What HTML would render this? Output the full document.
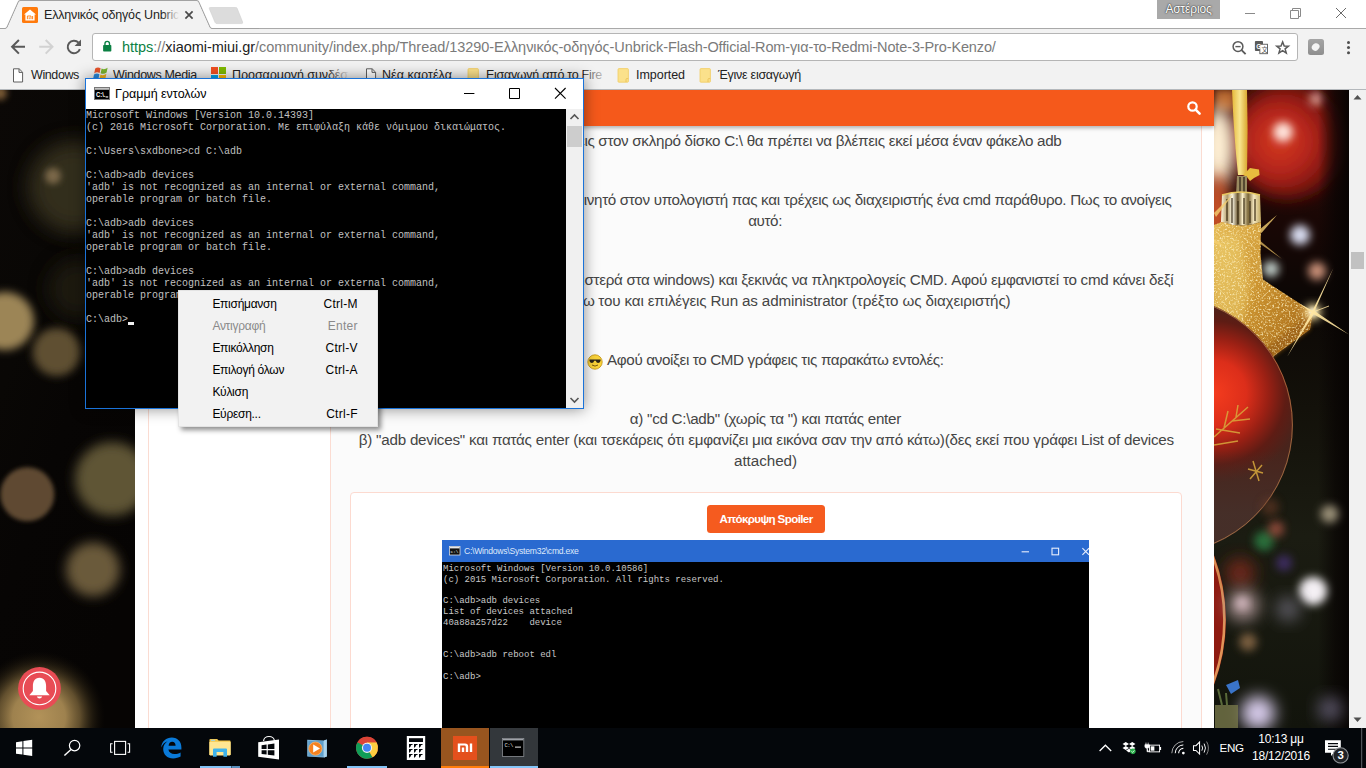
<!DOCTYPE html>
<html lang="el">
<head>
<meta charset="utf-8">
<title>Ελληνικός οδηγός Unbrick</title>
<style>
*{box-sizing:border-box}
html,body{margin:0;padding:0}
body{width:1366px;height:768px;overflow:hidden;position:relative;background:#fff;font-family:"Liberation Sans",sans-serif;}
.abs{position:absolute}
/* ---------- browser chrome ---------- */
#titlebar{position:absolute;left:0;top:0;width:1366px;height:29px;background:#fff}
#toolbar{position:absolute;left:0;top:29px;width:1366px;height:37px;background:#f2f2f2}
#bookbar{position:absolute;left:0;top:66px;width:1366px;height:24px;background:#f2f2f2;border-bottom:1px solid #b4b8bc}
#tabtitle{position:absolute;left:44px;top:6px;width:135px;height:18px;font-size:12.5px;line-height:18px;color:#222;white-space:nowrap;overflow:hidden}
#urlbox{position:absolute;left:92px;top:4px;width:1138px;height:28px;background:#fff;border:1px solid #b5b5b5;border-radius:3px}
#url{position:absolute;left:29px;top:1px;height:24px;line-height:24px;font-size:14.5px;white-space:nowrap;color:#7a7a7a}
.bm{position:absolute;top:0;height:18px;line-height:18px;font-size:12.5px;color:#222;white-space:nowrap}
#user{position:absolute;left:1157px;top:0;width:63px;height:19px;background:#a9a9a9;color:#fff;font-size:12px;letter-spacing:-.18px;line-height:18px;text-align:center;text-shadow:0 0 2px #333,0 0 1px #333}
/* ---------- page ---------- */
#page{position:absolute;left:0;top:89px;width:1349px;height:639px;background:#0b0805;overflow:hidden}
#content{position:absolute;left:135px;top:0;width:1079px;height:639px;background:#fff}
#rightcol{position:absolute;left:195px;top:0;width:872px;height:639px;background:#fbfbfb;border-left:1px solid #fbdcd2;border-right:1px solid #fbdcd2}
#orange{position:absolute;left:135px;top:1px;width:1079px;height:36px;background:#f5591b;box-shadow:0 2px 4px rgba(0,0,0,.3)}
.pl{position:absolute;font-size:15.2px;line-height:21px;color:#454545;height:21px;white-space:nowrap}
.pr{position:absolute;font-size:15.2px;letter-spacing:-.3px;line-height:21px;color:#454545;height:21px;text-align:right;white-space:nowrap}
#spoiler{position:absolute;left:350px;top:403px;width:832px;height:260px;background:#fff;border:1px solid #fcdad0;border-radius:4px}
#spbtn{position:absolute;left:707px;top:416px;width:118px;height:28px;background:#f55b1f;border-radius:3.5px;color:#fff;font-size:11.6px;font-weight:bold;letter-spacing:-.62px;line-height:27px;text-align:center;white-space:nowrap}
#img2{position:absolute;left:442px;top:451px;width:647px;height:200px;background:#000}
#img2 .tb{position:absolute;left:0;top:0;width:647px;height:22px;background:#2a6ad0}
#img2 pre{position:absolute;left:1px;top:23.8px;margin:0;font-family:"Liberation Mono",monospace;font-size:9px;line-height:10.83px;color:#c8c8c8}
#vscroll{position:absolute;left:1349px;top:89px;width:17px;height:639px;background:#f1f1f1}
/* ---------- cmd window ---------- */
#cmd{position:absolute;left:85px;top:78px;width:499px;height:331px;background:#000;border:1px solid #1a73d9;box-shadow:0 0 14px rgba(0,0,0,.45)}
#cmd .tb{position:absolute;left:0;top:0;width:497px;height:30px;background:#fff}
#cmd .tt{position:absolute;left:29px;top:6px;font-size:12.5px;line-height:18px;color:#000;white-space:nowrap}
#cmd pre{position:absolute;left:0;top:31.4px;margin:0;font-family:"Liberation Mono",monospace;font-size:10px;line-height:12px;color:#c0c0c0}
#cmd .sb{position:absolute;left:480px;top:30px;width:17px;height:299px;background:#f0f0f0}
/* ---------- context menu ---------- */
#ctx{position:absolute;left:178px;top:290px;width:200px;height:137px;background:#f2f2f2;border:1px solid #e3e3e3;box-shadow:3px 3px 5px rgba(0,0,0,.45)}
#ctx div{position:absolute;left:33.4px;width:145.4px;height:22px;line-height:22px;font-size:12px;letter-spacing:-.28px;color:#000;white-space:nowrap}
#ctx div span{position:absolute;right:0;top:0;letter-spacing:.27px}
#ctx div.dis{color:#8a8a8a}
/* ---------- taskbar ---------- */
#taskbar{position:absolute;left:0;top:728px;width:1366px;height:40px;background:#04070b}
.tbtn{position:absolute;top:0;width:48px;height:40px}
.ul{position:absolute;bottom:0;height:2px;background:#76b9ed}
.tray{position:absolute;color:#fff;font-size:12px;white-space:nowrap}
</style>
</head>
<body>

<!-- ================= PAGE ================= -->
<div id="page">
  <svg class="abs" style="left:0;top:0" width="135" height="639" viewBox="0 0 135 639">
    <defs>
      <filter id="b3" x="-50%" y="-50%" width="200%" height="200%"><feGaussianBlur stdDeviation="3"/></filter>
      <filter id="b2" x="-50%" y="-50%" width="200%" height="200%"><feGaussianBlur stdDeviation="2"/></filter>
      <filter id="b4" x="-50%" y="-50%" width="200%" height="200%"><feGaussianBlur stdDeviation="4"/></filter>
      <filter id="b6" x="-50%" y="-50%" width="200%" height="200%"><feGaussianBlur stdDeviation="6"/></filter>
      <filter id="b10" x="-50%" y="-50%" width="200%" height="200%"><feGaussianBlur stdDeviation="10"/></filter>
      <radialGradient id="glow1"><stop offset="0" stop-color="#b29259"/><stop offset=".4" stop-color="#a68852" stop-opacity=".95"/><stop offset=".62" stop-color="#80683c" stop-opacity=".75"/><stop offset=".82" stop-color="#40341c" stop-opacity=".4"/><stop offset="1" stop-color="#1a140a" stop-opacity="0"/></radialGradient>
      <linearGradient id="lg0" x1="0" y1="0" x2=".6" y2="1"><stop offset="0" stop-color="#0b0806"/><stop offset=".35" stop-color="#090705"/><stop offset=".6" stop-color="#070504"/><stop offset="1" stop-color="#060403"/></linearGradient>
    </defs>
    <rect width="135" height="639" fill="url(#lg0)"/>
    <circle cx="74" cy="98" r="46" fill="#3e3724" opacity=".8" filter="url(#b10)"/>
    <circle cx="0" cy="4" r="7" fill="#7a5a34" filter="url(#b3)"/>
    <circle cx="53" cy="87" r="8" fill="#7a6848" filter="url(#b3)"/>
    <circle cx="78" cy="200" r="30" fill="#2c2517" opacity=".6" filter="url(#b10)"/>
    <circle cx="5" cy="232" r="29" fill="#9c8556" filter="url(#b4)"/>
    <circle cx="56.6" cy="263" r="24" fill="#5e5032" filter="url(#b4)"/>
    <circle cx="112" cy="390" r="37" fill="#5e5436" filter="url(#b6)"/>
    <circle cx="27.3" cy="405.3" r="27" fill="#5e4a33" filter="url(#b2)"/>
    <circle cx="93" cy="480.5" r="27" fill="#6a5a3a" filter="url(#b6)"/>
    <circle cx="39" cy="628" r="66" fill="url(#glow1)"/>
    <circle cx="39.5" cy="599.4" r="21.4" fill="#e84c55"/>
    <circle cx="39.5" cy="599.4" r="16.3" fill="none" stroke="#fff" stroke-width="1.1"/>
    <g transform="translate(.5 .4)"><path d="M39 588.4 C34.2 588.4 32.4 592.4 32.4 596.6 V601.6 L28.8 605.8 H49.2 L45.6 601.6 V596.6 C45.6 592.4 43.8 588.4 39 588.4 Z" fill="#fff"/>
    <path d="M36.4 607.2 A2.7 2.7 0 0 0 41.6 607.2 Z" fill="#fff"/></g>
  </svg>
  <svg class="abs" style="left:1214px;top:0" width="135" height="639" viewBox="1214 0 135 639">
    <defs>
      <filter id="c2" x="-50%" y="-50%" width="200%" height="200%"><feGaussianBlur stdDeviation="2"/></filter>
      <filter id="c4" x="-50%" y="-50%" width="200%" height="200%"><feGaussianBlur stdDeviation="4"/></filter>
      <filter id="c8" x="-50%" y="-50%" width="200%" height="200%"><feGaussianBlur stdDeviation="8"/></filter>
      <linearGradient id="rg0" x1="0" y1="0" x2="0" y2="1"><stop offset="0" stop-color="#3a0d08"/><stop offset=".2" stop-color="#1a0705"/><stop offset=".32" stop-color="#0c0705"/><stop offset=".5" stop-color="#13110a"/><stop offset=".7" stop-color="#1b1c12"/><stop offset="1" stop-color="#12140c"/></linearGradient>
      <radialGradient id="rb1" cx=".42" cy=".5" r=".62"><stop offset="0" stop-color="#d63a22"/><stop offset=".45" stop-color="#b3241a"/><stop offset=".8" stop-color="#6e120c"/><stop offset="1" stop-color="#3a0a06"/></radialGradient>
      <radialGradient id="rb2" gradientUnits="userSpaceOnUse" cx="1214" cy="304" r="90"><stop offset="0" stop-color="#f43c1e"/><stop offset=".36" stop-color="#dc2e1a"/><stop offset=".6" stop-color="#9a2014"/><stop offset=".8" stop-color="#5e1c14"/><stop offset="1" stop-color="#48241c"/></radialGradient>
      <linearGradient id="rb2d" gradientUnits="userSpaceOnUse" x1="0" y1="362" x2="0" y2="425"><stop offset="0" stop-color="#45302a" stop-opacity="0"/><stop offset="1" stop-color="#45302a" stop-opacity=".88"/></linearGradient>
      <linearGradient id="gold" x1="0" y1="0" x2="1" y2="1"><stop offset="0" stop-color="#e6bc58"/><stop offset=".4" stop-color="#cc9430"/><stop offset=".75" stop-color="#b0741e"/><stop offset="1" stop-color="#865212"/></linearGradient>
      <linearGradient id="cap" x1="0" y1="0" x2="1" y2="0"><stop offset="0" stop-color="#fff6dc"/><stop offset=".16" stop-color="#b09a68"/><stop offset=".28" stop-color="#fffbea"/><stop offset=".42" stop-color="#6a5630"/><stop offset=".54" stop-color="#fdf2cc"/><stop offset=".68" stop-color="#7a6638"/><stop offset=".82" stop-color="#f6e8c0"/><stop offset="1" stop-color="#c0a860"/></linearGradient>
      <linearGradient id="edge" x1="0" y1="0" x2="1" y2="0"><stop offset="0" stop-color="#080403" stop-opacity="0"/><stop offset=".55" stop-color="#080403" stop-opacity=".7"/><stop offset="1" stop-color="#060302" stop-opacity=".95"/></linearGradient>
      <linearGradient id="rib" x1="0" y1="0" x2="1" y2="0"><stop offset="0" stop-color="#e6b93a"/><stop offset=".5" stop-color="#f8e58e"/><stop offset="1" stop-color="#d9a52c"/></linearGradient>
    </defs>
    <rect x="1214" width="135" height="639" fill="url(#rg0)"/>
    <!-- top red ornament -->
    <circle cx="1289" cy="52" r="58" fill="url(#rb1)" filter="url(#c8)"/>
    <circle cx="1283" cy="43" r="10" fill="#ffe4dc" filter="url(#c4)"/>
    <circle cx="1316" cy="10" r="7" fill="#e8b0a8" opacity=".8" filter="url(#c4)"/>
    <rect x="1318" y="0" width="31" height="639" fill="url(#edge)"/>
    <!-- top-left glow -->
    <rect x="1214" y="0" width="22" height="22" fill="#b8682e" filter="url(#c4)"/>
    <ellipse cx="1218" cy="58" rx="17" ry="40" fill="#fff0d4" filter="url(#c8)"/>
    <ellipse cx="1217" cy="125" rx="12" ry="40" fill="#d9582a" filter="url(#c8)"/>
    <!-- ribbon -->
    <path d="M1232 0 H1247 L1247.6 40 L1247 86 H1238 L1235.6 60 L1233.4 30 Z" fill="url(#rib)"/>
    <path d="M1243 86 L1250 79 L1259 80.6 L1259.6 86 L1254 89 L1250 92 L1247 88 Z" fill="#e8bd3e"/>
    <!-- cap -->
    <path d="M1237 87 H1247 V106 H1236 Z" fill="#9a8a60"/><path d="M1240 88 V105 M1244 88 V105" stroke="#3a3020" stroke-width="1.4"/>
    <path d="M1222 106 Q1241 100 1260 106 L1261 133 Q1241 140 1221 133 Z" fill="url(#cap)"/>
    <path d="M1227 110 V132 M1232 109 V134 M1238 112 V135 M1244 109 V135 M1250 112 V134 M1255 110 V132" stroke="#3a2c14" stroke-width="1.6" opacity=".75"/>
    <path d="M1222 106 Q1241 100 1260 106" fill="none" stroke="#e8c860" stroke-width="1.6"/>
    <!-- gold star body -->
    <path d="M1214 136 L1222 133 Q1241 140 1261 133 L1260.5 165 L1263 190.6 L1313 223 L1310 240.6 L1274.6 266.6 L1240 300 L1214 300 Z" fill="url(#gold)"/>
    <path d="M1214 150 L1240 146 L1250 200 L1240 250 L1214 262 Z" fill="#f2d878" opacity=".45" filter="url(#c4)"/>
    <path d="M1313 223 L1310 240.6 L1274.6 266.6 L1250 290 L1262 262 L1296 236 Z" fill="#9a5e18" opacity=".75" filter="url(#c2)"/>
    <filter id="glit" x="0" y="0" width="100%" height="100%"><feTurbulence type="fractalNoise" baseFrequency=".55" numOctaves="2" seed="3"/><feColorMatrix values="0 0 0 0 1  0 0 0 0 .9  0 0 0 0 .55  0 0 0 3.4 -1.7"/></filter>
    <clipPath id="gcp"><path d="M1214 136 L1222 133 Q1241 140 1261 133 L1260.5 165 L1263 190.6 L1313 223 L1310 240.6 L1274.6 266.6 L1240 300 L1214 300 Z"/></clipPath>
    <g clip-path="url(#gcp)"><rect x="1214" y="130" width="110" height="180" filter="url(#glit)" opacity=".8"/></g>
    <!-- bokeh -->
    <circle cx="1300" cy="146" r="10" fill="#d8dcf0" filter="url(#c4)"/>
    <circle cx="1317" cy="182" r="9" fill="#c99078" filter="url(#c4)"/>
    <circle cx="1271" cy="180" r="8" fill="#dff0ea" opacity=".85" filter="url(#c4)"/>
    
    <!-- big red ball -->
    <circle cx="1164" cy="336" r="129" fill="url(#rb2)"/>
    <circle cx="1164" cy="336" r="129" fill="url(#rb2d)"/>
    <circle cx="1164" cy="336" r="128.4" fill="none" stroke="#c98a50" stroke-width=".8" opacity=".8"/>
    <path d="M1214 348 L1248 318 M1224 339 L1228 322 M1232 332 L1250 330 M1216 340 L1240 344 M1214 356 L1238 352 M1236 328 L1238 316 M1253 372 L1259 392 M1248 380 L1263 384 M1250 390 L1262 376" stroke="#d8a83c" stroke-width="1.5" fill="none" opacity=".85"/>
    <!-- sparkle -->
    <circle cx="1313" cy="223" r="8" fill="#ffe9a8" filter="url(#c4)"/>
    <circle cx="1313" cy="223" r="3.4" fill="#fffbe8" filter="url(#c2)"/>
    <path d="M1333.4 179 L1314.6 222 L1349 245.6 L1313.6 225.2 L1287 268 L1311.4 223.6 L1298 214 L1312.6 221.4 Z" fill="#ffe6a0" opacity=".9"/>
    <path d="M1313 223 L1329 217" stroke="#ffe6a0" stroke-width="1" opacity=".8"/>
    <path d="M1259 141 L1277 126 L1261.5 144 Z M1214 124 L1234 104 L1216 128 Z M1214 150 L1226 158 L1214 154 Z" fill="#f5d070" opacity=".8"/>
    <path d="M1258 150 L1282 170 L1259 154 Z" fill="#f1c868" opacity=".7"/>
    <!-- second ball -->
    <circle cx="1044" cy="531" r="182" fill="#8e1a10"/>
    <circle cx="1044" cy="531" r="180.4" fill="none" stroke="#e09458" stroke-width="2.6"/>
    <!-- lower bokeh -->
    <circle cx="1264" cy="452" r="10" fill="#2f8a4a" opacity=".75" filter="url(#c4)"/>
    <circle cx="1276" cy="440" r="8" fill="#b85a48" opacity=".7" filter="url(#c4)"/><circle cx="1270" cy="418" r="9" fill="#6a3a28" opacity=".6" filter="url(#c4)"/>
    <circle cx="1240" cy="484" r="15" fill="#7a2a1c" opacity=".85" filter="url(#c8)"/>
    <circle cx="1329.5" cy="425" r="9" fill="#9a9078" filter="url(#c4)"/>
    <circle cx="1313" cy="502" r="14" fill="#f4f0f4" filter="url(#c4)"/>
    <circle cx="1243" cy="516" r="16" fill="#a08a8a" filter="url(#c8)"/><circle cx="1242" cy="514" r="6" fill="#d8bcc4" filter="url(#c4)"/>
    <circle cx="1288" cy="520" r="12" fill="#5a5860" filter="url(#c8)"/>
    <circle cx="1284" cy="474" r="8" fill="#5a3aa0" opacity=".55" filter="url(#c4)"/>
    <circle cx="1248" cy="553" r="9" fill="#7a5e40" filter="url(#c4)"/>
    <circle cx="1258" cy="624" r="17" fill="#d8ccec" filter="url(#c8)"/>
    <circle cx="1330" cy="620" r="12" fill="#5a5468" filter="url(#c8)"/>
    <path d="M1226 596 L1238 591 L1240 599 L1231 605 Z" fill="#3a74c8"/>
    <rect x="1215" y="616" width="23" height="23" fill="#77774a" opacity=".8"/><path d="M1218 600 L1222 616 M1226 604 L1227 616" stroke="#5a6a3a" stroke-width="2"/>
  </svg>
  <div id="content">
    <div id="rightcol"></div>
    <div style="position:absolute;left:13px;top:0;width:1px;height:639px;background:#fbdcd2"></div>
  </div>
  <div id="orange">
    <svg class="abs" style="left:1051px;top:10px" width="16" height="16" viewBox="0 0 16 16"><circle cx="6.5" cy="6.5" r="4.2" fill="none" stroke="#fff" stroke-width="2.2"/><path d="M9.6 9.6 L13.6 13.6" stroke="#fff" stroke-width="2.6" stroke-linecap="round"/></svg>
  </div>
  <div class="pr" style="right:754.5px;top:41px">Αν τώρα μπεις</div>
  <div class="pr" style="right:733.0px;top:100px">Στη συνέχεια συνδέεις το κινητό</div>
  <div class="pr" style="right:726.5px;top:180px">Πατάς το κουμπί έναρξη (κάτω αριστερά</div>
  <div class="pr" style="right:754.5px;top:201px">κλικ πάνω</div>
  <div class="pl" style="left:598.3px;top:41px;letter-spacing:-0.286px">στον σκληρό δίσκο C:\ θα πρέπει να βλέπεις εκεί μέσα έναν φάκελο adb</div>
  <div class="pl" style="left:619.8px;top:100px;letter-spacing:-0.311px">στον υπολογιστή πας και τρέχεις ως διαχειριστής ένα cmd παράθυρο. Πως το ανοίγεις</div>
  <div class="pl" style="left:748.2px;top:121px;letter-spacing:-0.393px">αυτό:</div>
  <div class="pl" style="left:626.4px;top:180px;letter-spacing:-0.267px">στα windows) και ξεκινάς να πληκτρολογείς CMD. Αφού εμφανιστεί το cmd κάνει δεξί</div>
  <div class="pl" style="left:598.3px;top:201px;letter-spacing:-0.143px">του και επιλέγεις Run as administrator (τρέξτο ως διαχειριστής)</div>
  <div class="pl" style="left:607.0px;top:260px;letter-spacing:-0.348px">Αφού ανοίξει το CMD γράφεις τις παρακάτω εντολές:</div>
  <div class="pl" style="left:629.8px;top:319px;letter-spacing:-0.277px">α) "cd C:\adb" (χωρίς τα ") και πατάς enter</div>
  <div class="pl" style="left:358.7px;top:340px;letter-spacing:-0.221px">β) "adb devices" και πατάς enter (και τσεκάρεις ότι εμφανίζει μια εικόνα σαν την από κάτω)(δες εκεί που γράφει List of devices</div>
  <div class="pl" style="left:734.0px;top:361px;letter-spacing:-0.036px">attached)</div>
  <svg class="abs" style="left:586.6px;top:264.6px" width="16" height="16" viewBox="0 0 16 16"><circle cx="8" cy="8" r="7.2" fill="#fbd43a" stroke="#c79a1c" stroke-width=".9"/><path d="M2.4 5.6 H13.6 V6.6 Q13.4 9 11.2 9 Q9.4 9 8.8 6.8 H7.2 Q6.6 9 4.8 9 Q2.6 9 2.4 6.6 Z" fill="#2a2418"/><path d="M5 11 Q8 13.2 11 11" fill="none" stroke="#7a5a10" stroke-width="1"/></svg>
  <div id="spoiler"></div>
  <div id="spbtn">Απόκρυψη Spoiler</div>
  <div id="img2">
    <div class="tb">
      <svg class="abs" style="left:7px;top:6px" width="12" height="10" viewBox="0 0 12 10"><rect x=".4" y=".4" width="10.6" height="8.6" fill="#111" stroke="#d8dce4" stroke-width=".8"/><rect x=".8" y=".8" width="9.8" height="1.6" fill="#e8e8e8"/><text x="1.6" y="7.4" font-size="4.4" fill="#fff" font-family="Liberation Mono,monospace">c:\</text></svg>
      <div class="abs" style="left:22px;top:4px;font-size:8.6px;line-height:14px;color:#dfe9fb;letter-spacing:-.25px;white-space:nowrap">C:\Windows\System32\cmd.exe</div>
      <svg class="abs" style="left:575px;top:0" width="72" height="22" viewBox="0 0 72 22"><path d="M4.6 11.8 H12" stroke="#e8eefc" stroke-width="1.1"/><rect x="35" y="8.2" width="6.6" height="6.6" fill="none" stroke="#e8eefc" stroke-width="1.1"/><path d="M65.4 8.2 L72 14.8 M65.4 14.8 L72 8.2" stroke="#e8eefc" stroke-width="1.1"/></svg>
    </div>
<pre>Microsoft Windows [Version 10.0.10586]
(c) 2015 Microsoft Corporation. All rights reserved.

C:\adb&gt;adb devices
List of devices attached
40a88a257d22    device


C:\adb&gt;adb reboot edl

C:\adb&gt;</pre>
  </div>
</div>
<div id="vscroll">
  <div class="abs" style="left:2px;top:163px;width:13px;height:17px;background:#c1c1c1"></div>
  <svg class="abs" style="left:0;top:0" width="17" height="17"><path d="M4.5 10.5 L8.5 6 L12.5 10.5Z" fill="#505050"/></svg>
  <svg class="abs" style="left:0;top:622px" width="17" height="17"><path d="M4.5 6.5 L8.5 11 L12.5 6.5Z" fill="#505050"/></svg>
</div>

<!-- ================= CHROME TOP ================= -->
<div id="titlebar">

  <svg class="abs" style="left:0;top:0" width="260" height="29" viewBox="0 0 260 29">
    <path d="M235.6 7.5 Q236.6 7.2 237.1 8.3 L242.6 22 Q243 23.6 241.6 23.6 L217 23.6 Q215.6 23.6 215 22.3 L209.3 8.6 Q209 7.5 210.2 7.5 Z" fill="#dcdcdc" stroke="#cfcfcf" stroke-width=".6"/>
    <path d="M0 28.5 L5.2 28.5 Q6.6 28.3 7.2 27 L18.2 2.3 Q19 .6 20.6 .6 L196.4 .6 Q198 .6 198.8 2.3 L209.8 27 Q210.4 28.3 211.8 28.5 L260 28.5" fill="none" stroke="#a2a2a2" stroke-width="1.25"/>
    <path d="M5.2 29 Q6.9 28.8 7.6 27.3 L18.6 2.6 Q19.2 1.1 20.6 1.1 L196.4 1.1 Q197.8 1.1 198.4 2.6 L209.4 27.3 Q210.1 28.8 211.8 29 Z" fill="#f2f2f2"/>
    <rect x="22" y="7" width="16" height="16" rx="1.5" fill="#ff7a0c"/>
    <path d="M30 9.4 L36 14.4 L34.6 14.4 L34.6 20.4 L25.4 20.4 L25.4 14.4 L24 14.4 Z" fill="#fff"/>
    <path d="M27.4 19.2 V16 H31 V19.2 M29.2 17.3 V19.2 M32.6 16 V19.2" fill="none" stroke="#ff7a0c" stroke-width=".9"/>
    <path d="M185.4 11.4 L192.6 18.6 M192.6 11.4 L185.4 18.6" stroke="#4a4a4a" stroke-width="1.7" fill="none"/>
  </svg>
  <div class="abs" style="left:259px;top:28px;width:1107px;height:1px;background:#a9a9a9"></div>
  <div id="tabtitle" style="letter-spacing:-.17px">Ελληνικός οδηγός Unbrick Flash</div>
  <div class="abs" style="left:162px;top:4px;width:18px;height:22px;background:linear-gradient(90deg,rgba(242,242,242,0),#f2f2f2 95%)"></div>
  <div id="user">Αστέριος</div>
  <svg class="abs" style="left:1240px;top:0" width="120" height="28" viewBox="0 0 120 28">
    <path d="M5 13.5 H15" stroke="#8a8a8a" stroke-width="1"/>
    <path d="M50.5 10.5 H58.5 V18.5 H50.5 Z M52.5 10.5 V8.5 H60.5 V16.5 H58.5" fill="none" stroke="#8a8a8a" stroke-width="1"/>
    <path d="M96 8 L106 18 M106 8 L96 18" stroke="#6a6a6a" stroke-width="1"/>
  </svg>
</div>
<div id="toolbar">

  <svg class="abs" style="left:0;top:0" width="92" height="38" viewBox="0 0 92 38">
    <path d="M25 17.8 H13 M18.9 11 L12.1 17.8 L18.9 24.6" fill="none" stroke="#595959" stroke-width="2"/>
    <path d="M39.2 17.8 H51.4 M45.7 11 L52.5 17.8 L45.7 24.6" fill="none" stroke="#d2d2d2" stroke-width="2"/>
    <path d="M78.6 13.6 A6.3 6.3 0 1 0 79.9 20.2" fill="none" stroke="#595959" stroke-width="2"/>
    <path d="M81 10.6 V17 H74.6 Z" fill="#595959"/>
  </svg>
  <div id="urlbox" style="width:1206px">
    <svg class="abs" style="left:9.4px;top:5.6px" width="11" height="12.8" viewBox="0 0 12 14"><rect x="1.2" y="5.4" width="9" height="7.2" rx=".8" fill="#0b8043"/><path d="M3.2 6 V4 A2.5 2.5 0 0 1 8.2 4 V6" fill="none" stroke="#0b8043" stroke-width="1.5"/></svg>
    <div id="url"><span style="letter-spacing:-0.032px"><span style="color:#0b8043">https</span>://<span style="color:#222">xiaomi-miui.gr</span>/community/index.php/Thread</span><span style="letter-spacing:-0.046px">/13290-Ελληνικός-οδηγός-Unbrick-</span><span style="letter-spacing:-0.133px">Flash-Official-Rom-για-το-Redmi-Note-3-Pro-Kenzo/</span></div>
    <svg class="abs" style="left:1136px;top:4px" width="66" height="20" viewBox="0 0 66 20">
      <circle cx="9" cy="8.6" r="4.9" fill="none" stroke="#5a5a5a" stroke-width="1.5"/><path d="M12.6 12.2 L16.6 16.2" stroke="#5a5a5a" stroke-width="1.8"/><path d="M6.4 8.6 H11.6" stroke="#5a5a5a" stroke-width="1.4"/>
      <g transform="translate(32.2 9.4) scale(.9) translate(-33 -10)"><rect x="26" y="3" width="9" height="11" rx="1" fill="#5a5a5a"/><rect x="31.5" y="6.5" width="8.5" height="10.5" fill="#fff" stroke="#5a5a5a" stroke-width="1"/><text x="27.6" y="11.6" font-size="7" fill="#fff" font-family="Liberation Sans,sans-serif" font-weight="bold">G</text><text x="33.2" y="15.2" font-size="7" fill="#5a5a5a" font-family="Liberation Sans,Noto Sans CJK SC,sans-serif">文</text></g>
      <g transform="translate(53.6 9.6) scale(.84) translate(-54 -10)"><path d="M54 3.2 L55.9 8 L61 8.3 L57 11.5 L58.4 16.5 L54 13.7 L49.6 16.5 L51 11.5 L47 8.3 L52.1 8 Z" fill="none" stroke="#5a5a5a" stroke-width="1.75" stroke-linejoin="miter"/></g>
    </svg>
  </div>
  <div class="abs" style="left:1308px;top:10px;width:16px;height:16px;border-radius:2.5px;background:linear-gradient(#a5a5a5,#8e8e8e)"></div>
  <div class="abs" style="left:1312.4px;top:13.8px;width:7.4px;height:8.4px;border-radius:70% 55% 60% 55%;background:#f4f4f4;transform:rotate(35deg)"></div>
  <div class="abs" style="left:1347px;top:12.2px;width:3px;height:3px;border-radius:50%;background:#4f4f4f;box-shadow:0 5.1px 0 #4f4f4f,0 10.2px 0 #4f4f4f"></div>
</div>
<div id="bookbar">

  <svg class="abs" style="left:12px;top:2px" width="12" height="15" viewBox="0 0 12 15"><path d="M1.5 .8 H7.2 L10.6 4.2 V14 H1.5 Z M7 1 V4.4 H10.4" fill="#fff" stroke="#5f5f5f" stroke-width="1"/></svg><div class="bm" style="left:31px;letter-spacing:-0.39px">Windows</div>
  <svg class="abs" style="left:92.5px;top:-1px" width="17" height="17" viewBox="0 0 17 17"><path d="M2.2 3.6 Q4.6 1.4 7.6 3.2 L6.6 8 Q3.8 6.4 1.2 8.4 Z" fill="#e8532a"/><path d="M8.6 3.6 Q11.6 5 14.6 2.8 L13.6 7.6 Q10.8 9.6 7.6 8.2 Z" fill="#7ab52e"/><path d="M1 9.6 Q3.6 7.6 6.4 9.2 L5.4 14 Q2.6 12.4 0 14.4 Z" fill="#2a8be0"/><path d="M7.4 9.6 Q10.4 11 13.4 8.8 L12.4 13.6 Q9.6 15.6 6.4 14.2 Z" fill="#f6b71d"/></svg><div class="bm" style="left:113px;letter-spacing:-0.33px">Windows Media</div>
  <svg class="abs" style="left:211px;top:1px" width="15" height="15"><rect x="0" y="0" width="7" height="7" fill="#f25022"/><rect x="8" y="0" width="7" height="7" fill="#7fba00"/><rect x="0" y="8" width="7" height="7" fill="#00a4ef"/><rect x="8" y="8" width="7" height="7" fill="#ffb900"/></svg><div class="bm" style="left:232px;letter-spacing:-0.06px;width:118px;overflow:hidden">Προσαρμογή συνδέσ</div>
  <div class="abs" style="left:326px;top:0;width:24px;height:20px;background:linear-gradient(90deg,rgba(242,242,242,0),#f2f2f2)"></div>
  <svg class="abs" style="left:364.5px;top:2px" width="12" height="15" viewBox="0 0 12 15"><path d="M1.5 .8 H7.2 L10.6 4.2 V14 H1.5 Z M7 1 V4.4 H10.4" fill="#fff" stroke="#5f5f5f" stroke-width="1"/></svg><div class="bm" style="left:382px;letter-spacing:0.06px">Νέα καρτέλα</div>
  <svg class="abs" style="left:467px;top:2px" width="13" height="15" viewBox="0 0 13 15"><path d="M1 1.6 Q1 .6 2 .6 H10.4 Q11.4 .6 11.4 1.6 V13.4 Q11.4 14.2 10.6 14.2 H1.8 Q1 14.2 1 13.4 Z" fill="#fbe18b" stroke="#f1cd62" stroke-width=".8"/><path d="M9 14 V11.4 Q9 10.6 9.8 10.6 H11.2" fill="none" stroke="#e8bf50" stroke-width=".8"/></svg><div class="bm" style="left:486px;letter-spacing:-0.29px">Εισαγωγή από το Fire</div>
  <div class="abs" style="left:584px;top:0;width:22px;height:20px;background:linear-gradient(90deg,rgba(242,242,242,.2),rgba(242,242,242,.85))"></div>
  <svg class="abs" style="left:617px;top:2px" width="13" height="15" viewBox="0 0 13 15"><path d="M1 1.6 Q1 .6 2 .6 H10.4 Q11.4 .6 11.4 1.6 V13.4 Q11.4 14.2 10.6 14.2 H1.8 Q1 14.2 1 13.4 Z" fill="#fbe18b" stroke="#f1cd62" stroke-width=".8"/><path d="M9 14 V11.4 Q9 10.6 9.8 10.6 H11.2" fill="none" stroke="#e8bf50" stroke-width=".8"/></svg><div class="bm" style="left:636px;letter-spacing:-0.04px">Imported</div>
  <svg class="abs" style="left:699px;top:2px" width="13" height="15" viewBox="0 0 13 15"><path d="M1 1.6 Q1 .6 2 .6 H10.4 Q11.4 .6 11.4 1.6 V13.4 Q11.4 14.2 10.6 14.2 H1.8 Q1 14.2 1 13.4 Z" fill="#fbe18b" stroke="#f1cd62" stroke-width=".8"/><path d="M9 14 V11.4 Q9 10.6 9.8 10.6 H11.2" fill="none" stroke="#e8bf50" stroke-width=".8"/></svg><div class="bm" style="left:718px;letter-spacing:-0.26px">Έγινε εισαγωγή</div>
</div>

<!-- ================= CMD WINDOW ================= -->
<div id="cmd">
  <div class="tb">
    <svg class="abs" style="left:8px;top:8px" width="17" height="14" viewBox="0 0 17 14"><rect x=".5" y=".5" width="15" height="12" fill="#000" stroke="#777" stroke-width="1"/><rect x="1" y="1" width="14" height="1.8" fill="#c4c4c4"/><text x="2" y="10" font-size="6.4" font-weight="bold" fill="#fff" font-family="Liberation Sans,sans-serif" textLength="9.4" lengthAdjust="spacingAndGlyphs">C:\.</text><rect x="11.6" y="9.4" width="2.6" height="1.1" fill="#fff"/></svg>
    <svg class="abs" style="left:370px;top:0" width="127" height="30" viewBox="0 0 127 30"><path d="M8 14.5 H18.4" stroke="#000" stroke-width="1"/><path d="M53.5 9.5 H63.5 V19.5 H53.5 Z" fill="none" stroke="#000" stroke-width="1"/><path d="M99 9 L109.6 19.6 M109.6 9 L99 19.6" stroke="#000" stroke-width="1.1"/></svg>
    <div class="tt">Γραμμή εντολών</div>
  </div>
<pre>Microsoft Windows [Version 10.0.14393]
(c) 2016 Microsoft Corporation. Με επιφύλαξη κάθε νόμιμου δικαιώματος.

C:\Users\sxdbone&gt;cd C:\adb

C:\adb&gt;adb devices
'adb' is not recognized as an internal or external command,
operable program or batch file.

C:\adb&gt;adb devices
'adb' is not recognized as an internal or external command,
operable program or batch file.

C:\adb&gt;adb devices
'adb' is not recognized as an internal or external command,
operable program or batch file.

C:\adb&gt;</pre>
  <div class="abs" style="left:42.4px;top:242.6px;width:5.8px;height:3.2px;background:#f0f0f0"></div>
  <div class="sb">
    <div class="abs" style="left:1px;top:17px;width:15px;height:21px;background:#cdcdcd"></div>
    <svg class="abs" style="left:0;top:0" width="17" height="17"><path d="M4.5 10 L8.5 6 L12.5 10" fill="none" stroke="#555" stroke-width="1.6"/></svg>
    <svg class="abs" style="left:0;top:282px" width="17" height="17"><path d="M4.5 7 L8.5 11 L12.5 7" fill="none" stroke="#555" stroke-width="1.6"/></svg>
  </div>
</div>

<!-- ================= CONTEXT MENU ================= -->
<div id="ctx">
  <div style="top:2px">Επισήμανση<span>Ctrl-M</span></div>
  <div class="dis" style="top:24px">Αντιγραφή<span>Enter</span></div>
  <div style="top:46px">Επικόλληση<span>Ctrl-V</span></div>
  <div style="top:68px">Επιλογή όλων<span>Ctrl-A</span></div>
  <div style="top:90px">Κύλιση</div>
  <div style="top:112px">Εύρεση...<span>Ctrl-F</span></div>
</div>

<!-- ================= TASKBAR ================= -->
<div id="taskbar">

  <svg class="abs" style="left:0;top:0" width="600" height="40" viewBox="0 0 600 40">
    <!-- start -->
    <path d="M16 14.2 L22.4 13.3 V19.4 H16 Z M23.4 13.1 L32.2 11.8 V19.4 H23.4 Z M16 20.4 H22.4 V26.6 L16 25.7 Z M23.4 20.4 H32.2 V28 L23.4 26.8 Z" fill="#fff"/>
    <!-- search -->
    <circle cx="74.6" cy="17.6" r="5.2" fill="none" stroke="#fff" stroke-width="1.2"/><path d="M71 21.4 L64.4 27.6" stroke="#fff" stroke-width="1.4"/>
    <!-- task view -->
    <rect x="114.6" y="13.4" width="11" height="13" fill="none" stroke="#fff" stroke-width="1.1"/>
    <path d="M112.6 15.7 H110.6 V24.2 H112.6 M127.6 15.7 H129.6 V24.2 H127.6" fill="none" stroke="#fff" stroke-width="1.1"/>
    <!-- edge -->
    <path d="M161.2 19.6 C161.6 13 166.4 9.4 171.8 9.4 C177.8 9.4 181.4 13.8 181.4 19.4 V21.6 H168.4 C168.8 24.6 171.4 26 174.4 26 C176.8 26 178.8 25.4 180.6 24.4 V28.6 C178.6 29.8 176 30.4 173.2 30.4 C167.2 30.4 163.2 26.6 163.2 21 C163.2 17.4 165 14.8 167.6 13.2 C164.6 14 162.4 16.4 161.2 19.6 Z M168.6 17.8 H175.6 C175.6 15.4 174.2 13.8 172.2 13.8 C170.2 13.8 168.8 15.4 168.6 17.8 Z" fill="#0a7ad9" fill-rule="evenodd"/>
    <!-- explorer -->
    <path d="M209.4 12 Q209.4 11 210.4 11 H217.2 L218.6 12.6 H229.6 Q230.6 12.6 230.6 13.6 V27 H209.4 Z" fill="#f3c64a"/>
    <rect x="209.4" y="13.8" width="21.2" height="13.6" rx=".8" fill="#ffe692"/>
    <path d="M213 28.8 V21.4 Q213 20.4 214 20.4 H226 Q227 20.4 227 21.4 V28.8 H223.4 V24 H216.6 V28.8 Z" fill="#3fb3ec"/>
    <rect x="211" y="11.8" width="4" height="1" fill="#9ad8f0"/>
    <!-- store -->
    <path d="M263.6 13 C263.6 7 274.4 7 274.4 13" fill="none" stroke="#fff" stroke-width="1.2"/>
    <path d="M258.2 14.2 L279 11.4 V31.6 L258.2 28.8 Z" fill="#fff"/>
    <path d="M261.6 17.2 L266.6 16.6 V21 H261.6 Z M267.8 16.4 L274.4 15.6 V21 H267.8 Z M261.6 22.2 H266.6 V26.6 L261.6 26 Z M267.8 22.2 H274.4 V27.6 L267.8 26.8 Z" fill="#04070b"/>
    <!-- media player -->
    <path d="M307.2 11.8 L324 12.6 L326.8 11.6 V28.4 L324 29.6 L307.2 28.6 Z" fill="#7db6dc"/>
    <path d="M324 12.6 L326.8 11.6 V28.4 L324 29.6 Z" fill="#a9d2ec"/>
    <rect x="308.4" y="13" width="14.6" height="15.4" fill="#5f9fcc"/>
    <circle cx="315.4" cy="20.6" r="6.6" fill="#f58220"/><circle cx="315.4" cy="20.6" r="6.6" fill="none" stroke="#fbb26a" stroke-width=".8"/>
    <path d="M313.2 16.6 L320 20.6 L313.2 24.6 Z" fill="#fff"/>
    <!-- chrome -->
    <circle cx="367" cy="19.8" r="11" fill="#db4437"/>
    <path d="M367 19.8 L357.47 14.3 A11 11 0 0 0 372.5 29.33 Z" fill="#0f9d58"/>
    <path d="M367 19.8 L372.5 29.33 A11 11 0 0 0 376.53 14.3 L367 14.3 Z" fill="#ffcd40"/>
    <path d="M357.47 14.3 A11 11 0 0 1 376.53 14.3 L367 14.3 Z" fill="#db4437"/>
    <circle cx="367" cy="19.8" r="5.1" fill="#f1f1f1"/><circle cx="367" cy="19.8" r="4" fill="#4285f4"/>
    <!-- calculator -->
    <rect x="406.8" y="8" width="18.4" height="24" fill="#fff"/>
    <rect x="409" y="10.2" width="14" height="3.8" fill="#04070b"/>
    <g fill="#04070b"><path d="M409 16 h4 l-4 4z M414 16 h4 l-4 4z M419 16 h4 l-4 4z M409 21 h4 l-4 4z M414 21 h4 l-4 4z M419 21 h4 l-4 4z M409 26 h4 l-4 4z M414 26 h4 l-4 4z M419 26 h4 l-4 4z"/></g>
    <g fill="#fff"><path d="M410.6 17 h2.4 v2.4z M415.6 17 h2.4 v2.4z M420.6 17 h2.4 v2.4z M410.6 22 h2.4 v2.4z M415.6 22 h2.4 v2.4z M420.6 22 h2.4 v2.4z M410.6 27 h2.4 v2.4z M415.6 27 h2.4 v2.4z M420.6 27 h2.4 v2.4z"/></g>
    <!-- mi -->
    <rect x="441" y="0" width="48" height="40" fill="#98551f"/>
    <rect x="453" y="8" width="24" height="24" fill="#e4501c"/>
    <path d="M457.8 24 V15.4 H465 Q468.2 15.4 468.2 18.6 V24 H465.8 V19 Q465.8 17.6 464.4 17.6 H460.2 V24 Z M461.8 19.4 H464.2 V24 H461.8 Z M469.8 15.4 H472.2 V24 H469.8 Z" fill="#fff"/>
    <rect x="441" y="38" width="48" height="2" fill="#ff7d0a"/>
    <!-- cmd -->
    <rect x="490" y="0" width="48" height="40" fill="#33373b"/>
    <rect x="502.4" y="10.4" width="21.4" height="18" fill="#000" stroke="#8b8f94" stroke-width=".8"/>
    <rect x="502.8" y="10.8" width="20.6" height="1.6" fill="#9ea2a8"/>
    <text x="504.4" y="19.4" font-size="5.6" fill="#ddd" font-family="Liberation Mono,monospace" textLength="9">C:\</text><rect x="515" y="18.6" width="6" height="1" fill="#eee"/>
    <rect x="490" y="38" width="48" height="2" fill="#85c6f9"/>
    <!-- underlines -->
    <rect x="200" y="38" width="31.4" height="2" fill="#82c2f5"/><rect x="231.8" y="38" width="8.2" height="2" fill="#5a8fbd"/>
    <rect x="347" y="38" width="40" height="2" fill="#82c2f5"/>
  </svg>
  <svg class="abs" style="left:1090px;top:0" width="276" height="40" viewBox="0 0 276 40">
    <path d="M9.6 23 L15.4 17.2 L21.2 23" fill="none" stroke="#fff" stroke-width="1.3"/>
    <!-- dropbox -->
    <g transform="translate(39.00 19.20) scale(0.770) translate(-37.60 -19.40)">
    <g fill="#fff"><path d="M33.4 12.6 L37.6 15.2 L33.4 17.8 L29.2 15.2Z M41.8 12.6 L46 15.2 L41.8 17.8 L37.6 15.2Z M33.4 17.8 L37.6 20.4 L33.4 23 L29.2 20.4Z M41.8 17.8 L46 20.4 L41.8 23 L37.6 20.4Z M37.6 21.4 L41.4 23.8 L37.6 26.2 L33.8 23.8Z"/></g>
    <circle cx="42.6" cy="24.8" r="3.6" fill="#2bb24c"/><path d="M40.8 24.8 L42.2 26.2 L44.6 23.6" fill="none" stroke="#fff" stroke-width="1"/>
    </g>
    <!-- battery -->
    <g transform="translate(63.20 20.00) scale(0.840) translate(-63.00 -20.00)">
    <rect x="58.6" y="16.6" width="12" height="8" fill="none" stroke="#fff" stroke-width="1.1"/><rect x="71" y="18.8" width="1.4" height="3.6" fill="#fff"/><rect x="60" y="18" width="4.4" height="5.2" fill="#fff"/>
    <path d="M54.4 13.6 V16 M57 13.6 V16 M53.2 16 H58.2 V18.6 Q58.2 20.2 55.7 20.2 Q53.2 20.2 53.2 18.6 Z M55.7 20 V24.4 H58" fill="#fff" stroke="#fff" stroke-width=".9"/>
    </g>
    <!-- wifi -->
    <g transform="translate(88.30 20.00) scale(0.900) translate(-93.00 -20.00)">
    <circle cx="98.6" cy="25.6" r="1.5" fill="#fff"/>
    <path d="M93.4 25.8 A5.4 5.4 0 0 1 98.6 20.4" fill="none" stroke="#fff" stroke-width="1.2"/>
    <path d="M89.6 25.8 A9.2 9.2 0 0 1 98.6 16.6" fill="none" stroke="#fff" stroke-width="1.1"/>
    <path d="M85.8 25.8 A13 13 0 0 1 98.6 12.8" fill="none" stroke="#b8b8b8" stroke-width="1"/>
    </g>
    <!-- volume -->
    <g transform="translate(110.90 20.00) scale(0.950) translate(-116.40 -20.00)">
    <path d="M108.6 17.6 H111.2 L115 13.8 V26.4 L111.2 22.6 H108.6 Z" fill="none" stroke="#fff" stroke-width="1.1"/>
    <path d="M117.4 17.4 Q119 20 117.4 22.8" fill="none" stroke="#fff" stroke-width="1"/>
    <path d="M119.8 15.4 Q122.6 20 119.8 24.8" fill="none" stroke="#fff" stroke-width="1"/>
    <path d="M122.4 13.2 Q126.2 20 122.4 27" fill="none" stroke="#8a8a8a" stroke-width="1"/>
    </g>
    <!-- notifications -->
    <path d="M235 12.2 H250.8 V24.8 H244 L241 28 V24.8 H235 Z" fill="#fff"/>
    <path d="M238 15.6 H248 M238 18.4 H248 M238 21.2 H248" stroke="#04070b" stroke-width="1.1"/>
    <circle cx="250.6" cy="27.4" r="7.6" fill="#202226" stroke="#8f9296" stroke-width="1.1"/>
    <text x="250.6" y="31.4" font-size="11.4" font-weight="bold" fill="#fff" text-anchor="middle" font-family="Liberation Sans,sans-serif">3</text>
    <rect x="271.2" y="0" width="1" height="40" fill="#62666c"/>
  </svg>
  <div class="tray" style="left:1219.5px;top:12px;font-size:11.6px;line-height:16px;letter-spacing:-.3px">ENG</div>
  <div class="tray" style="left:1241px;top:3px;width:80px;text-align:center;font-size:12px;line-height:16px;letter-spacing:-.2px">10:13 μμ</div>
  <div class="tray" style="left:1241px;top:20px;width:80px;text-align:center;font-size:12px;line-height:16px;letter-spacing:-.2px">18/12/2016</div>
</div>

</body>
</html>
